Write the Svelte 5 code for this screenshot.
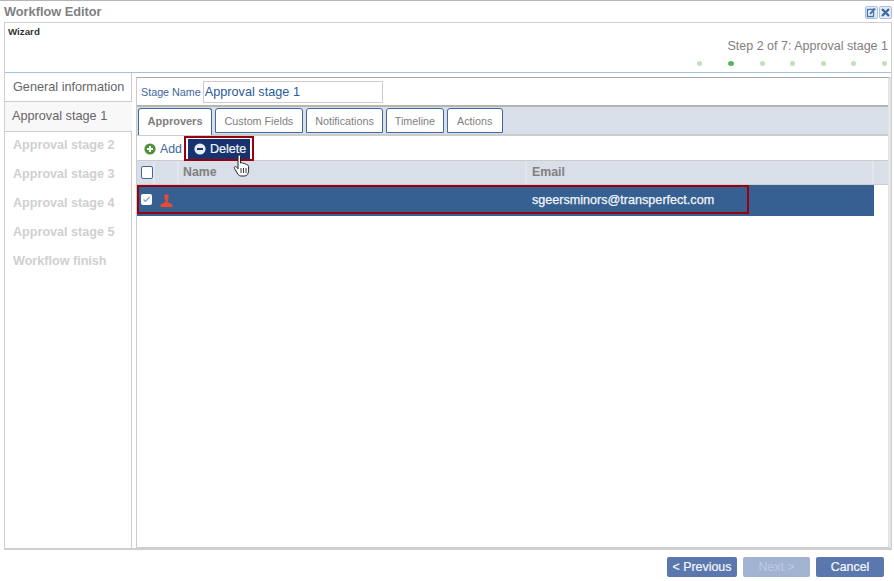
<script>
  const steps = ['Approval stage 2','Approval stage 3','Approval stage 4','Approval stage 5','Workflow finish'];
  const tabs = ['Approvers','Custom Fields','Notifications','Timeline','Actions'];
  const dots = [0,1,2,3,4,5,6];
</script>

<div class="win">
  <header class="title">
    <span class="ttl">Workflow Editor</span>
    <span class="wbtns">
      <span class="wbtn"><svg width="11" height="11" viewBox="0 0 11 11"><path d="M1.5 2.5h6v7h-6z" fill="#fff" stroke="#4a76ae" stroke-width="1.4"/><path d="M4 7l5-5.5" stroke="#4a76ae" stroke-width="2"/></svg></span>
      <span class="wbtn"><svg width="11" height="11" viewBox="0 0 11 11"><path d="M2 2l7 7M9 2l-7 7" stroke="#3f6aa3" stroke-width="2.4"/></svg></span>
    </span>
  </header>

  <div class="dialog">
    <div class="wizard">
      <div class="wlabel">Wizard</div>
      <div class="stepinfo">Step 2 of 7: Approval stage 1</div>
      <div class="dots">
        {#each dots as d}
          <i class="dot" class:on={d === 1}></i>
        {/each}
      </div>
    </div>

    <div class="body">
      <nav class="side">
        <div class="s first">General information</div>
        <div class="s active">Approval stage 1</div>
        <div class="rest">
          {#each steps as s}
            <div class="s off">{s}</div>
          {/each}
        </div>
      </nav>

      <main class="main">
        <div class="stage">
          <label for="sn">Stage Name</label>
          <input id="sn" value="Approval stage 1" />
        </div>
        <div class="tabs">
          {#each tabs as t, i}
            <div class="tab" class:sel={i === 0}>{t}</div>
          {/each}
        </div>
        <div class="toolbar">
          <span class="add">
            <svg width="12" height="12" viewBox="0 0 12 12"><circle cx="6" cy="6" r="5.6" fill="#4d9139"/><path d="M3 6h6M6 3v6" stroke="#fff" stroke-width="2"/></svg>
            Add
          </span>
          <span class="del">
            <svg width="12" height="12" viewBox="0 0 12 12"><circle cx="6" cy="6" r="5.6" fill="#e8ecf4"/><path d="M3 6h6" stroke="#17336f" stroke-width="2"/></svg>
            Delete
          </span>
        </div>
        <div class="thead">
          <div class="c0"><span class="cb"></span></div>
          <div class="c1"></div>
          <div class="c2">Name</div>
          <div class="c3">Email</div>
          <div class="c4"></div>
        </div>
        <div class="row">
          <div class="r0"><span class="cbon"><svg width="9" height="9" viewBox="0 0 9 9"><path d="M1.5 4.5l2 2 4-4.5" fill="none" stroke="#7f9cc4" stroke-width="1.2"/></svg></span></div>
          <div class="r1"><svg width="13" height="13" viewBox="0 0 13 13"><path d="M4.5 0.5h4v4.5l-1 1.500v1.500l5 2.500v2.500h-12v-2.500l5-2.500v-1.500l-1-1.500z" fill="#ec4a33"/></svg></div>
          <div class="r2"></div>
          <div class="r3">sgeersminors@transperfect.com</div>
        </div>
        <div class="hl hl-del"></div>
        <div class="hl hl-row"></div>
        <svg class="cursor" width="18" height="24" viewBox="0 0 18 24">
          <path d="M5.500 1.500c.9-.9 2-.3 2 1v6.500l.8-.2c1-.2 1.500.1 1.700.7 1-.4 1.800-.1 2 .7 1-.3 1.800.1 2 .8 1-.1 1.600.5 1.600 1.500v4c0 3-1.600 5.500-4 5.500h-3.500c-1.500 0-2.500-.8-3.300-2l-3.300-5.500c-.5-.9-.1-1.700.7-1.900.7-.2 1.300.2 1.800.9l1 1.300V2.500c0-.4.1-.8.5-1z" fill="#fff" stroke="#222" stroke-width="1"/>
          <path d="M8 14v5M10.500 14v5M13 14v5" stroke="#222" stroke-width=".9"/>
        </svg>
      </main>
    </div>
  </div>

  <footer class="foot">
    <button>&lt; Previous</button>
    <button class="dis">Next &gt;</button>
    <button class="cancel">Cancel</button>
  </footer>
</div>

<style>
  :global(body) { margin: 0; background: #fff; }
  .win {
    width: 894px; height: 581px; box-sizing: border-box; display: flex; flex-direction: column;
    font-family: "Liberation Sans", Arial, sans-serif; border-top: 1px solid #b5b5b5; overflow: hidden;
  }
  .title { height: 21px; display: flex; align-items: center; justify-content: space-between; padding: 0 2px 0 4px; flex: none; }
  .ttl { font-size: 12.75px; font-weight: bold; color: #808080; }
  .wbtns { display: flex; gap: 1px; margin-top: 2px; }
  .wbtn { width: 11px; height: 11px; border: 1px solid #a9bfe0; border-radius: 2px; background: #e6edf8; display: block; line-height: 0; }

  .dialog { margin: 0 2px 0 4px; height: 528px; flex: none; box-sizing: border-box; border: 1px solid #cfcfcf; border-bottom-width: 2px; display: flex; flex-direction: column; }
  .wizard { height: 50px; flex: none; box-sizing: border-box; border-bottom: 1px solid #a3c1e8; position: relative; }
  .wlabel { position: absolute; left: 3px; top: 3px; font-size: 9.75px; font-weight: bold; color: #333; }
  .stepinfo { position: absolute; right: 3px; top: 16px; font-size: 12.5px; color: #808080; white-space: nowrap; }
  .dots { position: absolute; right: 4px; top: 38px; display: flex; gap: 25.6px; }
  .dot { width: 5px; height: 5px; border-radius: 50%; background: #bfe0bd; display: block; }
  .dot.on { width: 6px; background: #5cb263; }

  .body { flex: 1; display: flex; min-height: 0; }
  .side { width: 127px; flex: none; display: flex; flex-direction: column; background: #f6f6f6; }
  .s { font-size: 12.7px; color: #666; white-space: nowrap; }
  .first { height: 29px; box-sizing: border-box; padding: 7px 0 0 8px; background: #fff; border-right: 1px solid #ccc; border-bottom: 1px solid #ccc; }
  .active { height: 29px; box-sizing: border-box; padding: 7px 0 0 7px; background: #f8f8f8; }
  .rest { flex: 1; background: #fff; border-top: 1px solid #ccc; border-right: 1px solid #ccc; }
  .off { height: 29px; box-sizing: border-box; padding: 6px 0 0 8px; font-weight: bold; color: #d0d0d0; font-size: 12.6px; }

  .main { flex: 1; position: relative; display: flex; flex-direction: column; margin: 4px 0 0 4px; width: 752px; box-sizing: border-box; border: 1px solid #ccc; border-top-color: #aaa; border-right: 3px solid #e4e4e4; min-width: 0; }
  .stage { height: 29px; flex: none; display: flex; align-items: center; gap: 2px; padding-left: 4px; box-sizing: border-box; border-bottom: 2px solid #b5b5b5; }
  .stage label { font-size: 10.75px; color: #3d669c; }
  .stage input { width: 180px; height: 22px; box-sizing: border-box; border: 1px solid #ccc; padding: 0 1px; font: 12.7px "Liberation Sans", Arial, sans-serif; color: #2b5a9b; outline: 0; }
  .tabs { height: 29px; flex: none; box-sizing: border-box; background: #d8dfe9; display: flex; gap: 3px; padding: 1px 0 0 1px; border-bottom: 2px solid #ccc; }
  .tab { height: 25px; box-sizing: border-box; background: #fff; border: 1px solid #41699f; border-radius: 3px 3px 0 0; font-size: 10.75px; color: #808080; padding: 6px 8.5px 0; white-space: nowrap; }
  .tab:nth-child(4) { padding: 6px 7.5px 0; }
  .tab:nth-child(5) { padding: 6px 9.5px 0; }
  .tab.sel { font-weight: bold; font-size: 11px; padding: 6px 8.5px 0; height: 27px; border-bottom: 0; }
  .toolbar { height: 24px; flex: none; box-sizing: border-box; padding: 2px 0 0 7px; display: flex; align-items: center; gap: 6px; }
  .add { font-size: 12.3px; color: #3e689f; display: flex; align-items: center; gap: 4px; }
  .del { height: 21px; box-sizing: border-box; width: 62px; background: #17336f; color: #f2f4f9; font-size: 12.6px; display: flex; align-items: center; gap: 4px; padding-left: 6px; -webkit-text-stroke: 0.2px #f2f4f9; }
  .thead { height: 25px; flex: none; box-sizing: border-box; display: flex; background: #d8dfe9; border-top: 1px solid #ccc; border-bottom: 1px solid #ccc; font-size: 12.3px; font-weight: bold; color: #808080; }
  .thead > div { box-sizing: border-box; border-right: 2px solid #e2e6ed; line-height: 23px; padding-left: 5px; }
  .c0 { width: 18px; padding-left: 4px !important; display: flex; align-items: center; }
  .cb { width: 11px; height: 11px; display: block; background: #fff; border: 1px solid #41699f; border-radius: 2px; }
  .c1 { width: 24px; }
  .c2 { width: 348px; padding-left: 4px !important; }
  .c3 { width: 347px; }
  .c4 { flex: 1; border-right: 0 !important; }
  .row { height: 31px; flex: none; width: 737px; display: flex; background: #376092; color: #f4f6fa; font-size: 12.6px; -webkit-text-stroke: 0.25px #f4f6fa; }
  .r0 { width: 18px; display: flex; align-items: center; padding: 0 0 2px 4px; box-sizing: border-box; }
  .cbon { width: 11px; height: 11px; background: #fff; border-radius: 2px; display: block; line-height: 0; padding: 1px; box-sizing: border-box; }
  .r1 { width: 24px; box-sizing: border-box; padding: 9px 0 0 5px; line-height: 0; }
  .r2 { width: 353px; }
  .r3 { line-height: 31px; white-space: nowrap; }

  .hl { position: absolute; box-sizing: border-box; border: 2px solid #97000d; pointer-events: none; }
  .hl-del { left: 47px; top: 58px; width: 70px; height: 25px; }
  .hl-row { left: 0; top: 107px; width: 612px; height: 29px; }
  .cursor { position: absolute; left: 96px; top: 76px; }

  .foot { flex: 1; display: flex; justify-content: flex-end; gap: 6px; padding: 7px 10px 0 0; align-items: flex-start; }
  .foot button { height: 20px; padding: 0; width: 70px; background: #5a77ae; color: #f5f7fb; border: 0; border-radius: 2px; font: 12.4px "Liberation Sans", Arial, sans-serif; -webkit-text-stroke: 0.2px #f5f7fb; }
  .foot .dis { width: 67px; background: #a2b3d2; color: #bccae0; -webkit-text-stroke: 0; }
  .foot .cancel { width: 68px; }
</style>
